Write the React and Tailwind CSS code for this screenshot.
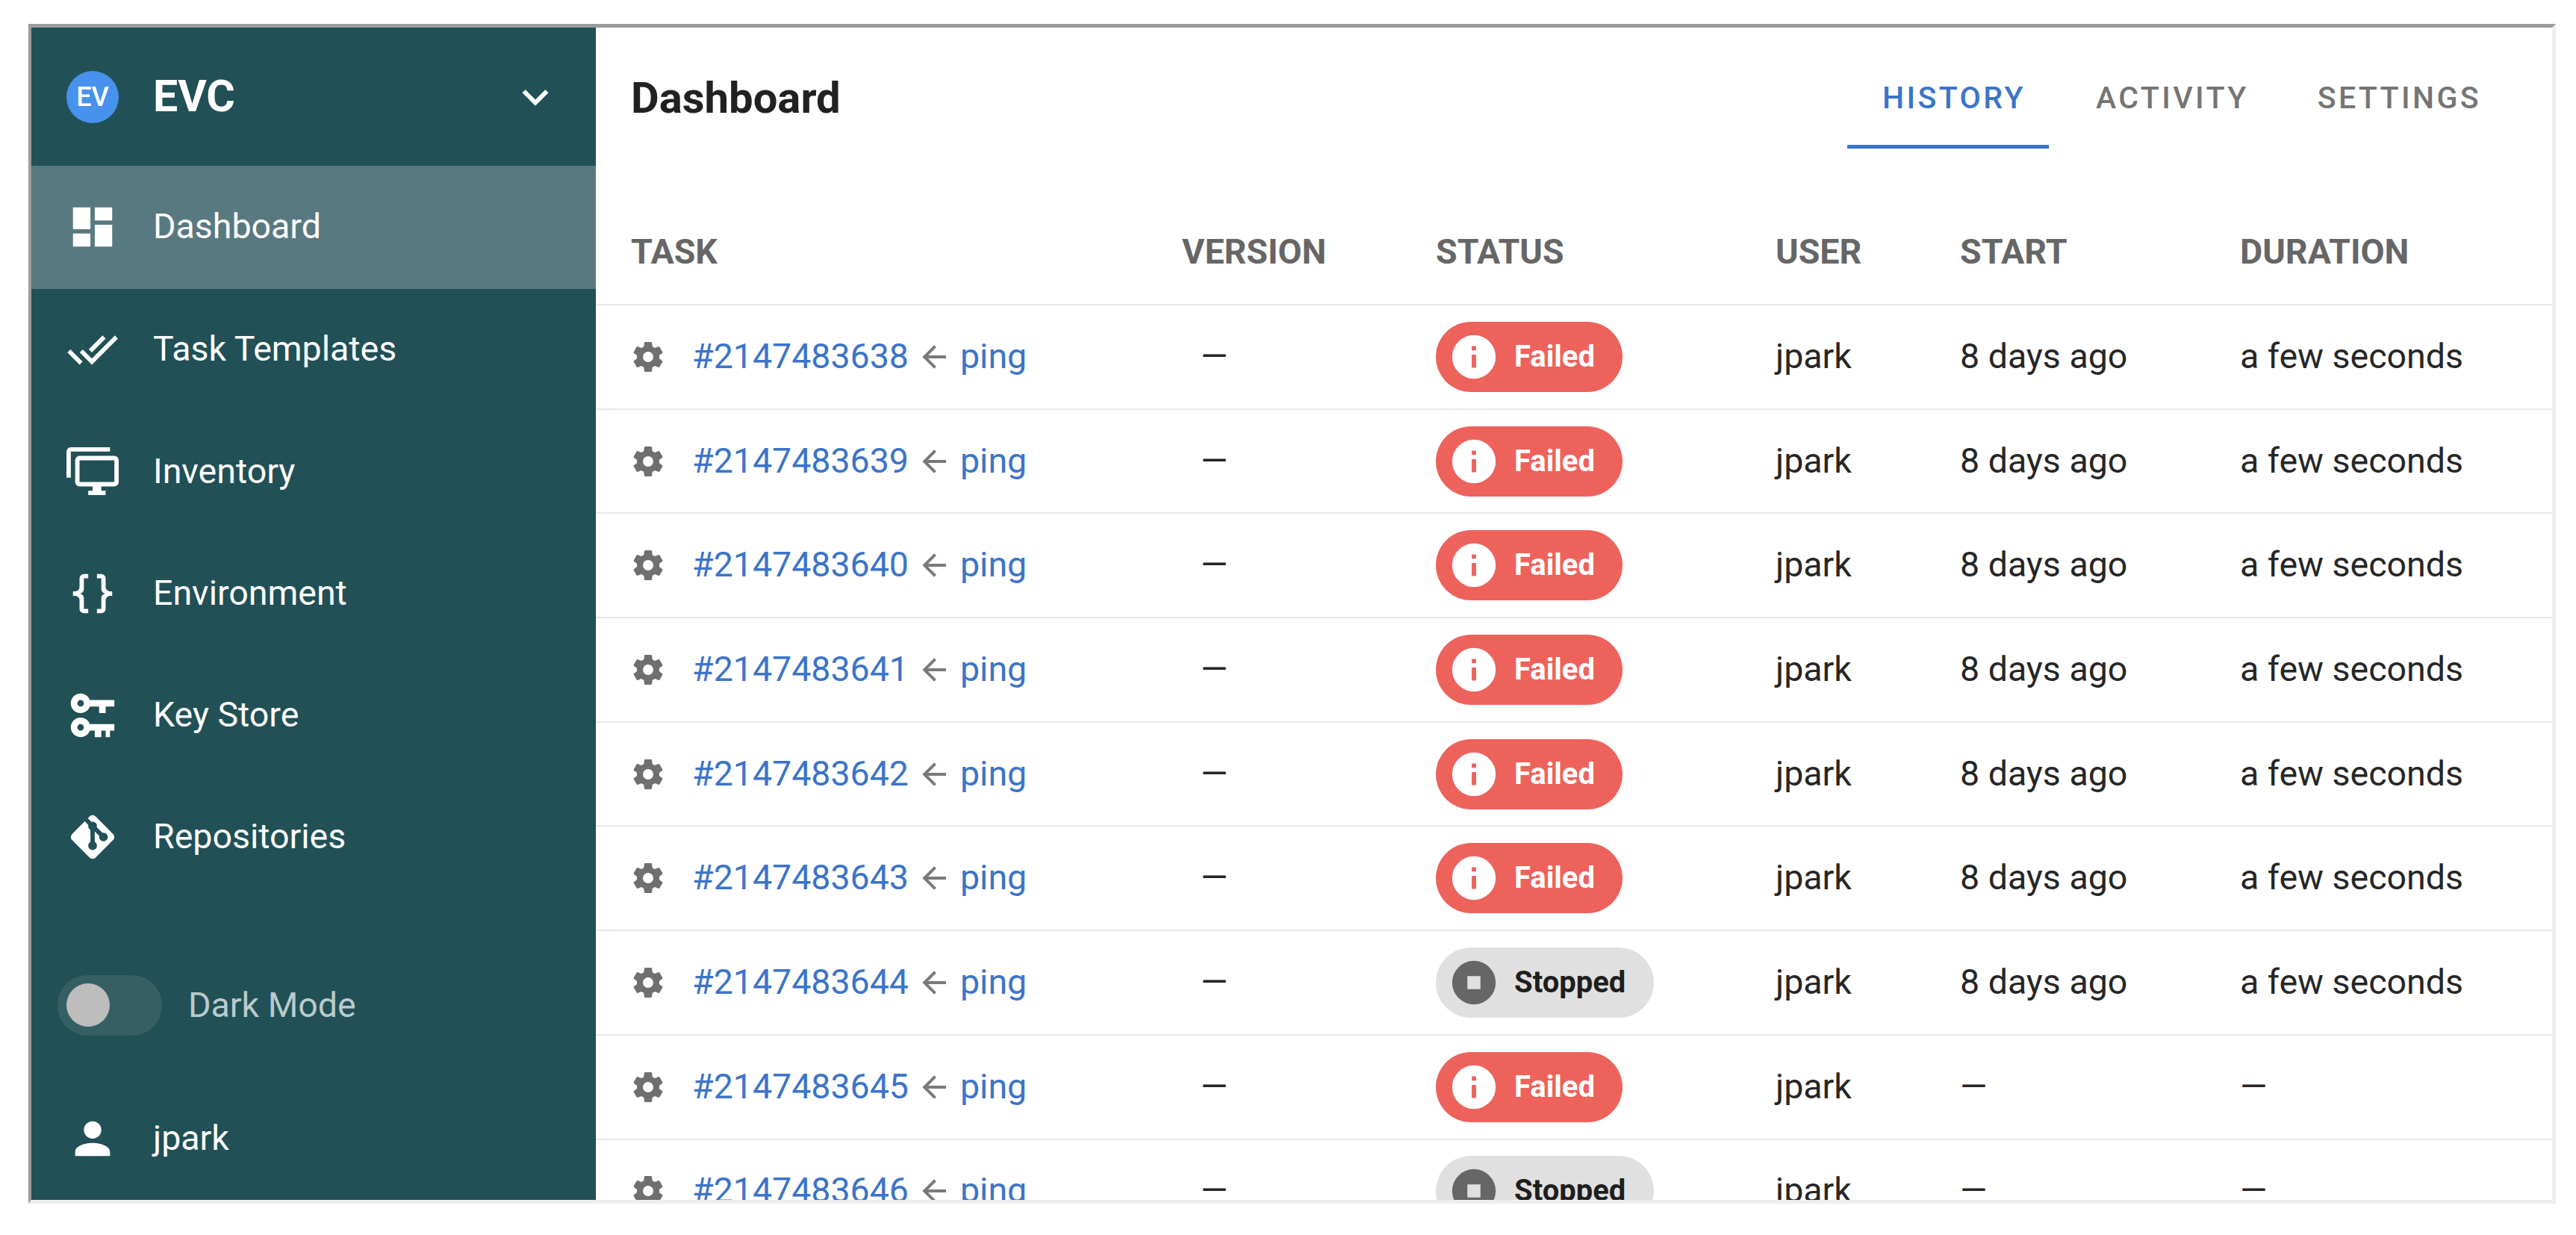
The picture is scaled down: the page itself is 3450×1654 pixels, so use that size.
const P = {
  dashboard: "M13,3V9H21V3M13,21H21V11H13M3,21H11V15H3M3,13H11V3H3V13Z",
  checkAll: "M0.41,13.41L6,19L7.41,17.58L1.83,12M22.24,5.58L11.66,16.17L7.5,12L6.07,13.41L11.66,19L23.66,7M18,7L16.59,5.58L10.24,11.93L11.66,13.34L18,7Z",
  monitors: "M22,17V7H6V17H22M22,5A2,2 0 0,1 24,7V17C24,18.11 23.1,19 22,19H16V21H18V23H10V21H12V19H6C4.89,19 4,18.1 4,17V7A2,2 0 0,1 6,5H22M2,3V15H0V3A2,2 0 0,1 2,1H20V3H2Z",
  braces: "M8,3A2,2 0 0,0 6,5V9A2,2 0 0,1 4,11H3V13H4A2,2 0 0,1 6,15V19A2,2 0 0,0 8,21H10V19H8V14A2,2 0 0,0 6,12A2,2 0 0,0 8,10V5H10V3M16,3A2,2 0 0,1 18,5V9A2,2 0 0,0 20,11H21V13H20A2,2 0 0,0 18,15V19A2,2 0 0,1 16,21H14V19H16V14A2,2 0 0,1 18,12A2,2 0 0,1 16,10V5H14V3H16Z",
  keys: "M6.5,2C8.46,2 10.13,3.25 10.74,5H22V8H18V11H15V8H10.74C10.13,9.75 8.46,11 6.5,11C4,11 2,9 2,6.5C2,4 4,2 6.5,2M6.5,5A1.5,1.5 0 0,0 5,6.5A1.5,1.5 0 0,0 6.5,8A1.5,1.5 0 0,0 8,6.5A1.5,1.5 0 0,0 6.5,5M6.5,13C8.46,13 10.13,14.25 10.74,16H22V19H20V22H18V19H16V22H13V19H10.74C10.13,20.75 8.46,22 6.5,22C4,22 2,20 2,17.5C2,15 4,13 6.5,13M6.5,16A1.5,1.5 0 0,0 5,17.5A1.5,1.5 0 0,0 6.5,19A1.5,1.5 0 0,0 8,17.5A1.5,1.5 0 0,0 6.5,16Z",
  git: "M2.6,10.59L8.38,4.8L10.07,6.5C9.83,7.35 10.22,8.28 11,8.73V14.27C10.4,14.61 10,15.26 10,16A2,2 0 0,0 12,18A2,2 0 0,0 14,16C14,15.26 13.6,14.61 13,14.27V9.41L15.07,11.5C15,11.65 15,11.82 15,12A2,2 0 0,0 17,14A2,2 0 0,0 19,12A2,2 0 0,0 17,10C16.82,10 16.65,10 16.5,10.07L13.93,7.5C14.19,6.57 13.71,5.55 12.78,5.16C12.35,5 11.9,4.96 11.5,5.07L9.8,3.38L10.59,2.6C11.37,1.81 12.63,1.81 13.41,2.6L21.4,10.59C22.19,11.37 22.19,12.63 21.4,13.41L13.41,21.4C12.63,22.19 11.37,22.19 10.59,21.4L2.6,13.41C1.81,12.63 1.81,11.37 2.6,10.59Z",
  account: "M12,4A4,4 0 0,1 16,8A4,4 0 0,1 12,12A4,4 0 0,1 8,8A4,4 0 0,1 12,4M12,14C16.42,14 20,15.79 20,18V20H4V18C4,15.79 7.58,14 12,14Z",
  chevron: "M7.41,8.58L12,13.17L16.59,8.58L18,10L12,16L6,10L7.41,8.58Z",
  cog: "M12,15.5A3.5,3.5 0 0,1 8.5,12A3.5,3.5 0 0,1 12,8.5A3.5,3.5 0 0,1 15.5,12A3.5,3.5 0 0,1 12,15.5M19.43,12.97C19.47,12.65 19.5,12.33 19.5,12C19.5,11.67 19.47,11.34 19.43,11L21.54,9.37C21.73,9.22 21.78,8.95 21.66,8.73L19.66,5.27C19.54,5.05 19.27,4.96 19.05,5.05L16.56,6.05C16.04,5.66 15.5,5.32 14.87,5.07L14.5,2.42C14.46,2.18 14.25,2 14,2H10C9.75,2 9.54,2.18 9.5,2.42L9.13,5.07C8.5,5.32 7.96,5.66 7.44,6.05L4.95,5.05C4.73,4.96 4.46,5.05 4.34,5.27L2.34,8.73C2.21,8.95 2.27,9.22 2.46,9.37L4.57,11C4.53,11.34 4.5,11.67 4.5,12C4.5,12.33 4.53,12.65 4.57,12.97L2.46,14.63C2.27,14.78 2.21,15.05 2.34,15.27L4.34,18.73C4.46,18.95 4.73,19.03 4.95,18.95L7.44,17.94C7.96,18.34 8.5,18.68 9.13,18.93L9.5,21.58C9.54,21.82 9.75,22 10,22H14C14.25,22 14.46,21.82 14.5,21.58L14.87,18.93C15.5,18.67 16.04,18.34 16.56,17.94L19.05,18.95C19.27,19.03 19.54,18.95 19.66,18.73L21.66,15.27C21.78,15.05 21.73,14.78 21.54,14.63L19.43,12.97Z",
  arrow: "M20,11V13H8L13.5,18.5L12.08,19.92L4.16,12L12.08,4.08L13.5,5.5L8,11H20Z",
  info: "M13,9H11V7H13M13,17H11V11H13M12,2A10,10 0 0,0 2,12A10,10 0 0,0 12,22A10,10 0 0,0 22,12A10,10 0 0,0 12,2Z",
  stop: "M12,2A10,10 0 0,0 2,12A10,10 0 0,0 12,22A10,10 0 0,0 22,12A10,10 0 0,0 12,2M9,9H15V15H9",
};

function Icon({ d, className }) {
  return (
    <svg viewBox="0 0 24 24" className={className} fill="currentColor">
      <path d={d} />
    </svg>
  );
}

const nav = [
  ["Dashboard", P.dashboard, true],
  ["Task Templates", P.checkAll, false],
  ["Inventory", P.monitors, false],
  ["Environment", P.braces, false],
  ["Key Store", P.keys, false],
  ["Repositories", P.git, false],
];

const rows = [
  [2147483638, "Failed", true],
  [2147483639, "Failed", true],
  [2147483640, "Failed", true],
  [2147483641, "Failed", true],
  [2147483642, "Failed", true],
  [2147483643, "Failed", true],
  [2147483644, "Stopped", true],
  [2147483645, "Failed", false],
  [2147483646, "Stopped", false],
];

const cols = "grid grid-cols-[738px_340px_455px_247px_377px_463px] items-center";

function Chip({ status }) {
  const failed = status === "Failed";
  return (
    <span
      className={
        failed
          ? "flex h-[94px] w-[250px] items-center rounded-[47px] bg-[#ee625c] pl-[16px] text-white"
          : "flex h-[94px] w-[292px] items-center rounded-[47px] bg-[#e0e0e0] pl-[16px] text-[#1e1e1e]"
      }
    >
      <Icon
        d={failed ? P.info : P.stop}
        className={failed ? "h-[70px] w-[70px] text-white" : "h-[70px] w-[70px] text-[#666666]"}
      />
      <span className="ml-[19px] text-[40px] font-bold">{status}</span>
    </span>
  );
}

export default function App() {
  return (
    <div className="h-[1654px] w-[3450px] overflow-hidden bg-white pl-[38px] pt-[32px] font-[Roboto,sans-serif]">
      <div className="flex h-[1580px] w-[3385px] border-t-[5px] border-r-[5px] border-b-[5px] border-l-[4px] border-t-[#9c9c9c] border-r-[#eeeeee] border-b-[#eeeeee] border-l-[#9c9c9c]">
        <aside className="flex w-[756px] shrink-0 flex-col bg-[#215056] text-white">
          <div className="flex h-[185px] shrink-0 items-center pl-[47px] pr-[46px]">
            <span className="flex h-[70px] w-[70px] items-center justify-center rounded-full bg-[#4692ec] text-[36px] font-medium">EV</span>
            <span className="ml-[46px] text-[59px] font-bold">EVC</span>
            <Icon d={P.chevron} className="ml-auto h-[70px] w-[70px]" />
          </div>
          {nav.map(([label, d, active]) => (
            <div key={label} className={active ? "flex h-[164.5px] shrink-0 items-center bg-[#58797f] pl-[47px]" : "flex h-[163.3px] shrink-0 items-center pl-[47px]"}>
              <Icon d={d} className="h-[70px] w-[70px] shrink-0" />
              <span className="ml-[46px] text-[46.5px]">{label}</span>
            </div>
          ))}
          <div className="mt-[103px] flex h-[81px] shrink-0 items-center pl-[35px]">
            <span className="flex h-[81px] w-[140px] items-center rounded-[40px] bg-[#365f64] pl-[12px]">
              <span className="h-[58px] w-[58px] rounded-full bg-[#bdbdbd]" />
            </span>
            <span className="ml-[35px] text-[46.5px] text-[#b9cbcc]">Dark Mode</span>
          </div>
          <div className="mt-[56px] flex h-[163.3px] shrink-0 items-center pl-[47px]">
            <Icon d={P.account} className="h-[70px] w-[70px] shrink-0" />
            <span className="ml-[46px] text-[46.5px]">jpark</span>
          </div>
        </aside>
        <main className="min-w-0 flex-1 overflow-hidden">
          <header className="flex h-[185px] items-start justify-between pl-[47px] pr-[95px]">
            <h1 className="mt-[59px] text-[58px] leading-[70px] font-bold text-[#212121]">Dashboard</h1>
            <nav className="flex text-[41px] font-medium tracking-[3.4px] uppercase">
              <span className="h-[162px] w-[270px] border-b-[5px] border-b-[#3b74c9] pl-[47px] pt-[72px] leading-[44px] text-[#3b74c9]">History</span>
              <span className="ml-[63px] pt-[72px] leading-[44px] text-[#757575]">Activity</span>
              <span className="ml-[92px] pt-[72px] leading-[44px] text-[#757575]">Settings</span>
            </nav>
          </header>
          <div className={`${cols} h-[187px] border-b-2 border-b-[#e8e8e8] pt-[46px] text-[46.5px] font-bold text-[#666666]`}>
            <span className="pl-[47px]">TASK</span>
            <span className="pl-[47px]">VERSION</span>
            <span className="pl-[47px]">STATUS</span>
            <span className="pl-[47px]">USER</span>
            <span className="pl-[47px]">START</span>
            <span className="pl-[45px]">DURATION</span>
          </div>
          {rows.map(([id, status, done]) => (
            <div key={id} className={`${cols} h-[139.7px] border-b-2 border-b-[#e8e8e8] text-[46.5px] text-[#262626]`}>
              <span className="flex items-center pl-[47px] text-[#3b74c9]">
                <Icon d={P.cog} className="-ml-[1px] h-[48px] w-[48px] shrink-0 text-[#6f6f6f]" />
                <span className="ml-[35px]">#{id}</span>
                <Icon d={P.arrow} className="ml-[10px] h-[48px] w-[48px] shrink-0 text-[#7a7a7a]" />
                <span className="ml-[11px]">ping</span>
              </span>
              <span className="pl-[72px]">—</span>
              <span className="pl-[47px]"><Chip status={status} /></span>
              <span className="pl-[47px]">jpark</span>
              <span className="pl-[47px]">{done ? "8 days ago" : "—"}</span>
              <span className="pl-[45px]">{done ? "a few seconds" : "—"}</span>
            </div>
          ))}
        </main>
      </div>
    </div>
  );
}
